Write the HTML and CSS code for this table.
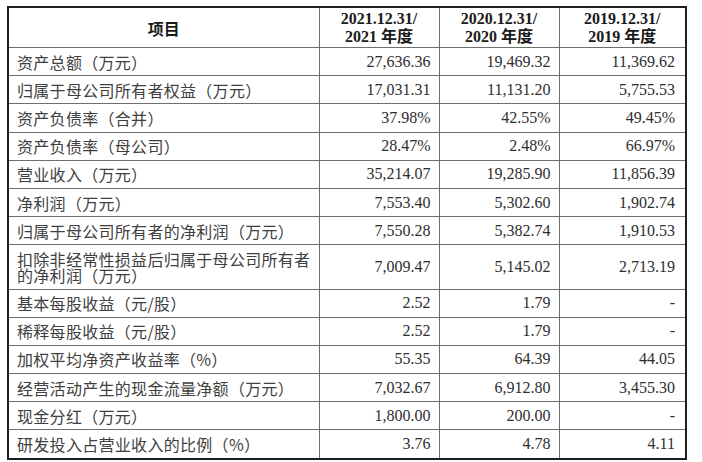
FILE: index.html
```html
<!DOCTYPE html>
<html lang="zh-CN">
<head>
<meta charset="utf-8">
<title>主要财务指标</title>
<link rel="stylesheet" href="styles.css">
</head>
<body>
<div class="page">
<table class="fin">
  <colgroup>
    <col class="c-item">
    <col class="c-num">
    <col class="c-num">
    <col class="c-last">
  </colgroup>
  <thead>
    <tr>
      <th class="h-item">项目</th>
      <th>2021.12.31/<br>2021 年度</th>
      <th>2020.12.31/<br>2020 年度</th>
      <th>2019.12.31/<br>2019 年度</th>
    </tr>
  </thead>
  <tbody>
    <tr><td class="lbl">资产总额（万元）</td><td>27,636.36</td><td>19,469.32</td><td>11,369.62</td></tr>
    <tr><td class="lbl">归属于母公司所有者权益（万元）</td><td>17,031.31</td><td>11,131.20</td><td>5,755.53</td></tr>
    <tr><td class="lbl">资产负债率（合并）</td><td>37.98%</td><td>42.55%</td><td>49.45%</td></tr>
    <tr><td class="lbl">资产负债率（母公司）</td><td>28.47%</td><td>2.48%</td><td>66.97%</td></tr>
    <tr><td class="lbl">营业收入（万元）</td><td>35,214.07</td><td>19,285.90</td><td>11,856.39</td></tr>
    <tr><td class="lbl">净利润（万元）</td><td>7,553.40</td><td>5,302.60</td><td>1,902.74</td></tr>
    <tr><td class="lbl">归属于母公司所有者的净利润（万元）</td><td>7,550.28</td><td>5,382.74</td><td>1,910.53</td></tr>
    <tr><td class="lbl">扣除非经常性损益后归属于母公司所有者的净利润（万元）</td><td>7,009.47</td><td>5,145.02</td><td>2,713.19</td></tr>
    <tr><td class="lbl">基本每股收益（元/股）</td><td>2.52</td><td>1.79</td><td>-</td></tr>
    <tr><td class="lbl">稀释每股收益（元/股）</td><td>2.52</td><td>1.79</td><td>-</td></tr>
    <tr><td class="lbl">加权平均净资产收益率（%）</td><td>55.35</td><td>64.39</td><td>44.05</td></tr>
    <tr><td class="lbl">经营活动产生的现金流量净额（万元）</td><td>7,032.67</td><td>6,912.80</td><td>3,455.30</td></tr>
    <tr><td class="lbl">现金分红（万元）</td><td>1,800.00</td><td>200.00</td><td>-</td></tr>
    <tr><td class="lbl">研发投入占营业收入的比例（%）</td><td>3.76</td><td>4.78</td><td>4.11</td></tr>
  </tbody>
</table>
</div>
</body>
</html>
```
FILE: styles.css
```css
html, body {
  margin: 0;
  padding: 0;
  background: #ffffff;
}

.page {
  padding: 6px 0 0 7px;
}

.fin {
  border-collapse: collapse;
  table-layout: fixed;
  width: 678px;
  border: 2px solid #1e1e1e;
  font-family: "Liberation Serif", serif;
  font-size: 16px;
  color: #2e2e2e;
}

.c-item { width: 311px; }
.c-num { width: 120px; }
.c-last { width: 127px; }

.fin th,
.fin td {
  border: 1px solid #6e6e6e;
}

.fin th {
  font-family: "Liberation Serif", "Noto Sans CJK SC", serif;
  font-weight: bold;
  color: #1a1a1a;
  line-height: 18px;
  height: 39px;
  padding: 0 4px;
  text-align: center;
  vertical-align: middle;
}

.fin th.h-item {
  font-family: "Noto Sans CJK SC", sans-serif;
}

.fin td {
  line-height: 16px;
  padding: 5.6px 8px;
  text-align: right;
  vertical-align: middle;
  white-space: nowrap;
}

.fin td.lbl {
  font-family: "Noto Sans CJK SC", sans-serif;
  text-align: left;
  white-space: normal;
  padding-left: 8px;
  padding-right: 6px;
  letter-spacing: 0.3px;
  color: #404040;
}

.fin td:last-child {
  padding-right: 10px;
}
```
